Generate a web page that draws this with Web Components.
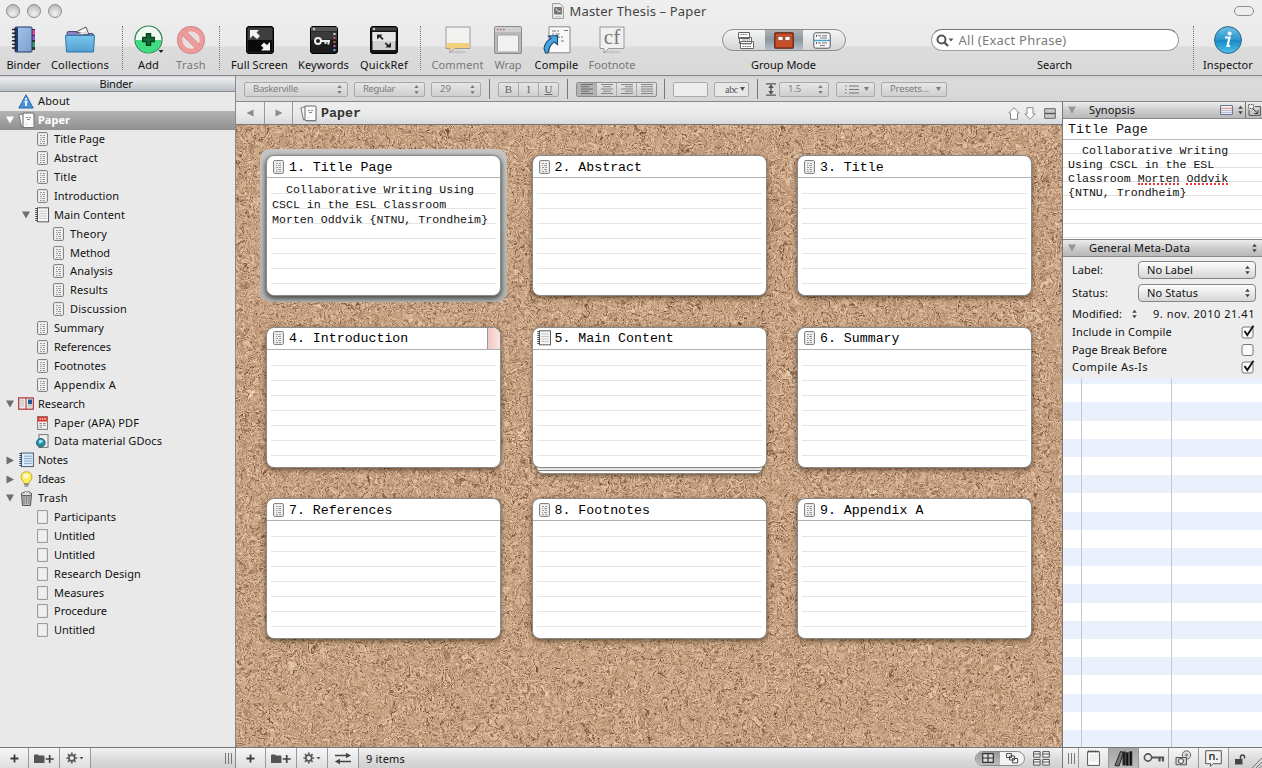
<!DOCTYPE html>
<html lang="en">
<head>
<meta charset="utf-8">
<title>Master Thesis – Paper</title>
<style>
html,body{margin:0;height:100%;overflow:hidden}
body{font:11px/14px "Noto Sans","Open Sans",sans-serif;color:#111;background:#ececec}
</style>
</head>
<body>
<app-window></app-window>
<script>
const doc = (w=11,h=14) => `<svg width="${w}" height="${h}" viewBox="0 0 11 14"><rect x=".6" y=".6" width="9.800" height="12.800" rx="1" fill="#f2f2f2" stroke="#777"/><g stroke="#999" stroke-width="1"><path d="M3 3.500h2M6 3.500h2M3 5.500h1M5 5.500h3M3 7.500h2M6 7.500h2M3 9.500h1M5 9.500h3M3 11.500h2M6 11.500h2"/></g></svg>`;
const stack = `<svg width="17" height="17" viewBox="0 0 17 17"><path d="M.8 3 5 1.600l2.500 12L3.600 15z" fill="#f4f4f4" stroke="#777"/><rect x="5" y="1" width="11" height="14.600" rx="1" fill="#fafafa" stroke="#666"/><path d="M8 5.500h2M11 5.500h2M9 7.500h3" stroke="#888"/><path d="M8 12.500h1" stroke="#bbb"/><path d="M6 16.200h10.600V4" fill="none" stroke="#999" stroke-width=".7"/></svg>`;
const note = `<svg width="14" height="16" viewBox="0 0 14 16"><rect x="2.500" y=".8" width="11" height="14" fill="#f6f6f6" stroke="#5d5d5d"/><path d="M4 4h8M4 6.500h8M4 9h8M4 11.500h8" stroke="#bbb" stroke-width=".8"/><path d="M1.600 1v14" stroke="#444" stroke-width="2.600" stroke-dasharray="1 1"/></svg>`;
const gear = `<svg width="18" height="12" viewBox="0 0 18 12"><circle cx="5.800" cy="6" r="2.900" fill="none" stroke="#555" stroke-width="1.600"/><path d="M5.800.6v2M5.800 9.400v2M.4 6h2M9.200 6h2M2 2.200l1.400 1.400M8.200 8.400l1.400 1.400M9.600 2.200 8.200 3.600M3.400 8.400 2 9.800" stroke="#555" stroke-width="1.700"/><path d="M13.500 5h4l-2 2.500z" fill="#555"/></svg>`;
const ICONS = {
doc:doc(), stack, note, gear,
blank:`<svg width="11" height="14"><path d="M.6.6h9.800v12.800H.6z" fill="#efefef" stroke="#8a8a8a" stroke-width=".9"/></svg>`,
info:`<svg width="16" height="15" viewBox="0 0 16 15"><path d="M8 .8 15.200 14H.8z" fill="#4593d6" stroke="#2c6ba5" stroke-linejoin="round"/><path d="M5 9 8 3l3 6z" fill="#79bbed"/><path d="M8 4v1.700M8 7v5" stroke="#fff" stroke-width="1.700"/></svg>`,
research:`<svg width="16" height="13" viewBox="0 0 16 13"><rect x=".7" y=".9" width="14.600" height="11.300" fill="#f0ebeb" stroke="#a33" stroke-width="1.200"/><path d="M8 1v11" stroke="#a33"/><path d="M2 3.200h4M2 5h4M2 7h4M2 9h4M9.500 8.500h4.500M9.500 10h4.500" stroke="#bbb" stroke-width=".9"/><path d="M10 2.500h4v4.700h-4z" fill="#185a97"/></svg>`,
pdf:`<svg width="11" height="14" viewBox="0 0 11 14"><rect x=".6" y=".6" width="9.800" height="12.800" fill="#f2f2f2" stroke="#777"/><path d="M.6.6h9.800v5H.6z" fill="#d93a33"/><path d="M2.500 3h1.700M5 3h1.400M7.300 3h1.600" stroke="#ffd0cc" stroke-width="1.400"/><path d="M2.500 7.500h2.400M6 7.500h2.500M2.500 9.400h2.400M6 9.400h2.500M2.500 11.300h2.400" stroke="#888"/></svg>`,
web:`<svg width="13" height="14" viewBox="0 0 13 14"><rect x="3" y=".6" width="9" height="12.800" fill="#eee" stroke="#777"/><circle cx="4.800" cy="8.800" r="4.300" fill="#2f8faf" stroke="#1c5a76"/><path d="M3 6.500q2-1.500 3.400 0T4.800 9 3 8z" fill="#9be3ef"/><path d="M4 12.200q2-2 3.600-1" stroke="#1c8f5a" fill="none"/></svg>`,
notes:`<svg width="15" height="16" viewBox="0 0 15 16"><rect x="2.400" y="1" width="12" height="13.600" fill="#dcecfb" stroke="#46607a"/><path d="M5 4.200h8M5 6.600h8M5 9h8M5 11.400h8" stroke="#8aa8c8"/><path d="M1.600 1v14" stroke="#24405c" stroke-width="2.400" stroke-dasharray="1.100 .9"/></svg>`,
bulb:`<svg width="13" height="17" viewBox="0 0 13 17"><path d="M6.500.8a5.300 5.300 0 0 1 3 9.800L9 12.500H4L3.500 10.600A5.300 5.300 0 0 1 6.500.8z" fill="#ffed5c" stroke="#c9ab2a"/><circle cx="6.200" cy="5" r="2.600" fill="#fffbd0"/><path d="M4 13.200h5M4.500 15h4" stroke="#8d8d8d" stroke-width="1.600"/></svg>`,
can:`<svg width="13" height="16" viewBox="0 0 13 16"><path d="M1.500 4.500h10l-1 11h-8z" fill="#b9b9b9" stroke="#555"/><path d="M4 6v8M6.500 6v8M9 6v8" stroke="#7f7f7f"/><ellipse cx="6.500" cy="4" rx="5.500" ry="1.700" fill="#ddd" stroke="#555"/><path d="M4 3l1-2 2 1.500L9 .8 9.500 3.500" fill="#f5f5f5" stroke="#777" stroke-width=".8"/></svg>`,
down:`<svg width="10" height="8"><path d="M1 .5h8L5 7.500z" fill="#6e6e6e"/></svg>`,
downw:`<svg width="10" height="8"><path d="M1 .5h8L5 7.500z" fill="#fff"/></svg>`,
right:`<svg width="10" height="9"><path d="M1.500.5v8L9 4.500z" fill="#6e6e6e"/></svg>`,
ud:`<svg width="5" height="9" viewBox="0 0 5 9"><path d="M.3 3 2.500 0l2.200 3zM.3 6h4.400L2.500 9z" fill="currentColor"/></svg>`,
updown:`<svg width="7" height="10" viewBox="0 0 7 10"><path d="M1.200 3.800 3.500.8l2.300 3zM1.200 6.200h4.600L3.500 9.200z" fill="#444"/></svg>`,
binder:`<svg width="26" height="28" viewBox="0 0 26 28"><rect x="19" y="3" width="5" height="21" fill="#333"/><path d="M21 4h3v5h-3z" fill="#e0449a"/><path d="M21 10h3v4h-3z" fill="#8d59c9"/><path d="M21 16h3v5h-3z" fill="#37a06a"/><defs><linearGradient id="a" x2="1" y2="1"><stop stop-color="#a7c4ea"/><stop offset="1" stop-color="#7a9fd0"/></linearGradient></defs><rect x="4" y="1" width="17" height="25" rx="1" fill="url(#a)" stroke="#20365e"/><path d="M4 1.500h3v24H4z" fill="#1d3768"/><path d="M1 3.500h4M1 7.200h4M1 11h4M1 14.700h4M1 18.400h4M1 22h4" stroke="#222" stroke-width="1.400"/></svg>`,
collections:`<svg width="32" height="28" viewBox="0 0 32 28"><path d="M3 7q0-1.500 1.500-1.500h8l2 2H28q1.500 0 1.500 1.500v8H3z" fill="#8c7fc0" stroke="#4c4a86"/><path d="m12 6 10-5 3 8z" fill="#fafafa" stroke="#555"/><path d="m14 8 8-3 2 3z" fill="#ddd"/><defs><linearGradient id="b" x2="0" y2="1"><stop stop-color="#7cc6ec"/><stop offset="1" stop-color="#4f9fd2"/></linearGradient></defs><path d="M1.500 9.500h29L29.500 26H2.500z" fill="url(#b)" stroke="#2b77a6"/></svg>`,
add:`<svg width="30" height="30" viewBox="0 0 30 30"><circle cx="14.500" cy="14.500" r="13.500" fill="#eefaf1" stroke="#2f7f50" stroke-width="1.200"/><path d="M1.800 15h25.400a12.700 12.700 0 0 1-25.400 0z" fill="#3fdc84"/><path d="M8 14.500h13M14.500 8v13" stroke="#07431f" stroke-width="5.500"/><path d="M9.500 14.500h10M14.500 9.500v10" stroke="#1a6a3a" stroke-width="2.500"/><path d="M24.500 25h5L27 28z" fill="#222"/></svg>`,
trash:`<svg width="28" height="28" viewBox="0 0 28 28"><circle cx="14" cy="14" r="11" fill="none" stroke="#c08080" stroke-width="6"/><circle cx="14" cy="14" r="11" fill="#e9dede" stroke="#ee9b9b" stroke-width="4.600"/><path d="m6.500 6.500 15 15" stroke="#c98484" stroke-width="6"/><path d="m6 6 16 16" stroke="#ee9b9b" stroke-width="4.600"/></svg>`,
full:`<svg width="28" height="28" viewBox="0 0 28 28"><rect x=".5" y=".5" width="27" height="27" rx="2.500" fill="#222" stroke="#000"/><path d="M2 2h24v12H2z" fill="#3e3e3e"/><path d="M2 14h24v12H2z" fill="#0a0a0a"/><path d="M4 4h9L10.500 6.500l3.500 3.500-3 3L7 9.500l-3 3z" fill="#f2f2f2"/><path d="M24 24.500h-9l2.500-2.500-2.500-2.500 3-3 3 2.500 3-3z" fill="#f2f2f2"/></svg>`,
keywords:`<svg width="28" height="28" viewBox="0 0 28 28"><rect x=".5" y=".5" width="27" height="27" rx="2.500" fill="#1c1c1c" stroke="#000"/><path d="M1 1h26v4H1z" fill="#555"/><path d="M1 5.500h26v8H1z" fill="#3a3a3a"/><circle cx="4" cy="3" r="1.200" fill="#ccc"/><circle cx="8" cy="15" r="3" fill="none" stroke="#eee" stroke-width="2"/><path d="M11 15h9M18.500 15v3.500M15.500 15v3" stroke="#eee" stroke-width="2"/><path d="M23.500 7h2v2h-2z" fill="#ddd"/><path d="M23.500 11h2v2h-2z" fill="#c55"/><path d="M23.500 15h2v2h-2z" fill="#c66"/><path d="M23.500 19h2v2h-2z" fill="#a6c"/><path d="M23.500 23h2v2h-2z" fill="#7ad"/></svg>`,
quick:`<svg width="28" height="28" viewBox="0 0 28 28"><rect x=".5" y=".5" width="27" height="27" rx="2.500" fill="#161616" stroke="#000"/><path d="M1.500 1.500h25v3h-25z" fill="#444"/><circle cx="4" cy="3" r="1.200" fill="#ccc"/><path d="M2.500 6h23v18h-23z" fill="#d0d2d4"/><path d="M2.500 6h23v9h-23z" fill="#e6e7e7"/><path d="M7 8.500h5.500L11 10l2.600 2.700-1.200 1.200L9.600 11.200 7 13.500zM21 21.500h-5.500l1.500-1.500-2.300-2.400 1.200-1.200 2.500 2.300L21 16.500z" fill="#222"/></svg>`,
comment:`<svg width="26" height="28" viewBox="0 0 26 28"><ellipse cx="13" cy="26" rx="9" ry="1.500" fill="#c6c6c6"/><path d="M1 1h24v21.500H9.500L5 27v-4.500H1z" fill="#f2f2f0" stroke="#999"/><path d="M1.500 17h23v5H9.200L5.500 25.800V22h-4z" fill="#f0cf7d"/></svg>`,
wrap:`<svg width="28" height="28" viewBox="0 0 28 28"><rect x=".5" y=".5" width="27" height="27" rx="1.500" fill="#b9b9b9" stroke="#8a8a8a"/><path d="M1 1h26v5H1z" fill="#cfcfcf"/><path d="M3 3.500h1.800M6 3.500h1.800M9 3.500h1.800" stroke="#b77" stroke-width="1.600"/><path d="M3.500 9h21v17h-21z" fill="#f0f1f1" stroke="#a5a5a5"/></svg>`,
compile:`<svg width="28" height="28" viewBox="0 0 28 28"><path d="M6 .8h21v26H6z" fill="#f8f8f8" stroke="#8a8a8a"/><path d="M9 5h4M14 5h2M21 4.500h4M9 8h2M12.500 8h4M15 11h2M18 11h2M18 15h3" stroke="#777"/><path d="m5.500 10 9-.5v9l-3-2.500C7.500 18 6 21 5 27H2.500L1 22.500C2 17 5 14 8 12.600z" fill="#4aa5dc" stroke="#1b4a75" stroke-width="1.100"/></svg>`,
footnote:`<svg width="26" height="28" viewBox="0 0 26 28"><ellipse cx="13" cy="26" rx="9" ry="1.500" fill="#c6c6c6"/><path d="M1 1h24v21.500H9.500L5 27v-4.500H1z" fill="#f0f0f0" stroke="#999"/></svg>`,
inspect:`<svg width="30" height="30" viewBox="0 0 30 30"><defs><linearGradient id="c" x2="0" y2="1"><stop stop-color="#6fc0e4"/><stop offset=".5" stop-color="#2b97cf"/><stop offset=".52" stop-color="#188ac6"/><stop offset="1" stop-color="#4fc3ea"/></linearGradient></defs><circle cx="15" cy="15" r="13.400" fill="url(#c)" stroke="#2c6687"/><circle cx="16.600" cy="8.500" r="2" fill="#fff"/><path d="M12 12.500h4.500l-2 8.500h2.500" fill="none" stroke="#fff" stroke-width="2.200"/></svg>`,
gdocs:`<svg width="18" height="19" viewBox="0 0 18 19"><path d="M1.500 1.500h11v6h-11zM2.500 6.500h12v6h-12zM3.500 10.500h13v7h-13z" fill="#fff" stroke="#666"/><path d="M3.500 3.500h7M5 9h8M5.500 13h9M5.500 15.500h9" stroke="#777" stroke-dasharray="1.600 .7"/></svg>`,
gcork:`<svg width="20" height="17" viewBox="0 0 20 17"><rect x=".8" y=".8" width="18.400" height="15.400" rx="1" fill="#c8502c" stroke="#5b2011" stroke-width="1.200"/><path d="M4 4.500h5v4H4zM11 4.500h5v4h-5z" fill="#fff" stroke="#7d2f1b" stroke-width=".6"/></svg>`,
glist:`<svg width="18" height="17" viewBox="0 0 18 17"><rect x=".8" y=".8" width="16.400" height="15.400" rx="2" fill="#f8f8f8" stroke="#555"/><path d="M5 3.800h3M9 3.800h5M7 6h7M5 11h3M9 11h5M7 13.500h5" stroke="#777"/><path d="M1 8.500h16" stroke="#4aa1cb" stroke-width="1.600"/><path d="M3 3.800h1M3 11h1" stroke="#222" stroke-width="1.400"/></svg>`,
lens:`<svg width="18" height="13" viewBox="0 0 18 13"><circle cx="5.500" cy="5.500" r="4" fill="none" stroke="#555" stroke-width="2"/><path d="m8.500 8.500 3.500 3.500" stroke="#555" stroke-width="2.400"/><path d="M12.500 4.500h5l-2.500 3z" fill="#555"/></svg>`,
file:`<svg width="12" height="16" viewBox="0 0 12 16"><path d="M.6.6H8L11.400 4v11.400H.6z" fill="#eee" stroke="#999"/><rect x="2" y="4" width="8" height="7.500" rx="1" fill="#777"/><path d="M4 5.500c1 2.500 2 3 4.500 3" stroke="#eee" fill="none"/><path d="M3 13.500h6" stroke="#ccc"/></svg>`,
plus:`<svg width="9" height="9"><path d="M4.500 .5v8M.5 4.500h8" stroke="#3c3c3c" stroke-width="1.800"/></svg>`,
folder:`<svg width="20" height="11" viewBox="0 0 20 11"><path d="M0 2.500Q0 1.500 1 1.500h3l1 1h4.500q1 0 1 1V10H0z" fill="#555"/><path d="M15.700 2v8M11.700 6h8" stroke="#444" stroke-width="1.700"/></svg>`,
swap:`<svg width="18" height="13" viewBox="0 0 18 13"><path d="M1 3.500h11M17 9.500H6" stroke="#444" stroke-width="1.700"/><path d="m12 .8 5 2.700-5 2.700zM6 6.800.8 9.500 6 12.200z" fill="#444"/></svg>`,
grip:`<svg width="8" height="11"><path d="M1.500 0v11M4.500 0v11M7.500 0v11" stroke="#777"/></svg>`,
grid:`<svg width="12" height="10"><path d="M.7.7h10.600v8.600H.7zM6 .7v8.600M.7 5h10.600" fill="#ddd" stroke="#333" stroke-width="1.200"/></svg>`,
free:`<svg width="13" height="11"><path d="M.6.6h5v4h-5zM3.600 3h5v4h-5zM6.600 5.500h5v4.400h-5z" fill="#fff" stroke="#444"/></svg>`,
tiles:`<svg width="17" height="15"><path d="M.6.6h6.500v5.600H.6zM9.800.6h6.500v5.600H9.800zM.6 8.500h6.500v5.600H.6zM9.800 8.500h6.500v5.600H9.800zM.6 3h6.500M9.800 3h6.500M.6 11h6.500M9.800 11h6.500" fill="#f5f5f5" stroke="#555"/></svg>`,
pad:`<svg width="13" height="16"><path d="M.6 1.600h11.800v13.800H.6z" fill="#fff" stroke="#555"/><path d="M1 1.500h11" stroke="#444" stroke-width="2" stroke-dasharray="1.200 1"/><path d="M2.500 5h8M2.500 7h8M2.500 9h8M2.500 11h8" stroke="#ddd"/></svg>`,
books:`<svg width="20" height="17" viewBox="0 0 20 17"><path d="m1 15.500 5.500-14 3 1L5 16z" fill="#777" stroke="#222"/><path d="M8.500 1.500h3.200v14H8.500z" fill="#222"/><path d="M12 2.500h2.500v13H12zM15.500 1.500H18v14h-2.500z" fill="#111" stroke="#444" stroke-width=".6"/></svg>`,
key:`<svg width="22" height="12" viewBox="0 0 22 12"><circle cx="5" cy="5.500" r="3.600" fill="none" stroke="#555" stroke-width="1.600"/><path d="M8.500 5.500H20M20 4.500v5M16.500 5.500v4" stroke="#555" stroke-width="2.200"/></svg>`,
snap:`<svg width="17" height="16" viewBox="0 0 17 16"><circle cx="11.500" cy="5" r="4.200" fill="#ddd" stroke="#666"/><circle cx="11.500" cy="5" r="1.600" fill="#888"/><path d="M1 7.500h10.500v7.300H1z" fill="#ccc" stroke="#555"/><circle cx="6" cy="11" r="2.500" fill="#eee" stroke="#444"/></svg>`,
notebub:`<svg width="17" height="17" viewBox="0 0 17 17"><path d="M.7.7h15.600v13H8l-2.500 2.600v-2.600H.7z" fill="#f2f2f2" stroke="#555"/></svg>`,
lock:`<svg width="11" height="11" viewBox="0 0 11 11"><path d="M0 5h7.500v5.500H0z" fill="#444"/><path d="M5.500 5V3a2 2 0 0 1 4 0v1.500" fill="none" stroke="#444" stroke-width="1.500"/></svg>`,
resize:`<svg width="11" height="11"><path d="M1 11 11 1M5 11l6-6M8.500 11 11 8.500" stroke="#777"/></svg>`,
back:`<svg width="8" height="8"><path d="M7.500 .5v7L.5 4z" fill="#8b8b8b"/></svg>`,
fwd:`<svg width="8" height="8"><path d="M.5 .5v7L7.500 4z" fill="#8b8b8b"/></svg>`,
up:`<svg width="12" height="13"><path d="M6 .8 11.200 6H9.500v6.300h-7V6H.8z" fill="#fff" stroke="#888"/></svg>`,
dn:`<svg width="12" height="13"><path d="M6 12.200 11.200 7H9V.7H3V7H.8z" fill="#fff" stroke="#888"/></svg>`,
split:`<svg width="12" height="11"><path d="M.7.7h10.600v9.600H.7z" fill="#c9c9c9" stroke="#666"/><path d="M.7 5.500h10.600" stroke="#555" stroke-width="1.400"/></svg>`,
spacing:`<svg width="10" height="13"><path d="M0 .8h10M0 12.200h10M5 2v9" stroke="#555" stroke-width="1.300"/><path d="M5 1.500 7.800 5H2.200zM5 11.500 7.800 8H2.200z" fill="#555"/></svg>`,
list:`<svg width="14" height="9"><path d="M0 1h1.500M0 4.500h1.500M0 8h1.500M4 1h10M4 4.500h10M4 8h10" stroke="#777" stroke-width="1.200"/></svg>`,
tri:`<svg width="5" height="4"><path d="M0 0h5L2.500 4z" fill="currentColor"/></svg>`,
al:`<svg width="12" height="10"><path d="M0 .5h12M0 2.700h8M0 5h12M0 7.200h8M0 9.500h12" stroke="#6f6f6f"/></svg>`,
ac:`<svg width="12" height="10"><path d="M0 .5h12M2 2.700h8M0 5h12M2 7.200h8M0 9.500h12" stroke="#848484"/></svg>`,
ar:`<svg width="12" height="10"><path d="M0 .5h12M4 2.700h8M0 5h12M4 7.200h8M0 9.500h12" stroke="#848484"/></svg>`,
aj:`<svg width="12" height="10"><path d="M0 .5h12M0 2.700h12M0 5h12M0 7.200h12M0 9.500h12" stroke="#848484"/></svg>`,
card:`<svg width="13" height="10"><path d="M.6.6h11.800v8.800H.6z" fill="#fff" stroke="#5e6a86"/><path d="M1 3.300h11" stroke="#d77"/><path d="M1 5.300h11M1 7.300h11" stroke="#aac"/></svg>`,
img:`<svg width="13" height="12"><path d="M.6.6h5v4h-5z" fill="#eee" stroke="#555" stroke-dasharray="1.500 .8"/><path d="M7 2.600h5.400v8.800H1V6" fill="none" stroke="#555"/><path d="m5 5 4.500 4M10 6v3.500H6.500" stroke="#333" fill="none"/></svg>`,
check:`<svg width="14" height="14" viewBox="0 0 14 14"><rect x="1" y="2" width="11" height="11" rx="2" fill="#fbfbfb" stroke="#777"/><path d="m3.500 6 2.800 4L12.500 .8" fill="none" stroke="#111" stroke-width="1.900"/></svg>`,
uncheck:`<svg width="14" height="14" viewBox="0 0 14 14"><rect x="1" y="1.500" width="11" height="11" rx="2" fill="#fbfbfb" stroke="#777"/></svg>`
};

const define = (tag, css, html) => customElements.define(tag, class extends HTMLElement{
  constructor(){
    super();
    this.attachShadow({mode:'open'});
  }
  connectedCallback(){
    if(this.shadowRoot.childNodes.length) return;
    const t = document.createElement('template');
    t.innerHTML = `<style>*{box-sizing:border-box}${css}</style>${typeof html==='function' ? html(this) : html}`;
    this.shadowRoot.append(t.content.cloneNode(true));
  }
});

/* Text whose tracking is adjusted so that it fills the width "w". */
const fitted = [];
customElements.define('fit-text', class extends HTMLElement{
  constructor(){
    super();
    this.attachShadow({mode:'open'}).innerHTML = '<style>:host{display:inline-block;white-space:pre}</style><span><slot></slot></span>';
  }
  connectedCallback(){ fitted.push(this); }
  fit(){
    const w = +this.getAttribute('w');
    if(!w) return;
    const n = this.textContent.length;
    const now = this.shadowRoot.querySelector('span').getBoundingClientRect().width;
    if(now) this.style.letterSpacing = ((w - now) / n).toFixed(3) + 'px';
  }
});

define('ui-icon', ':host{display:inline-flex;flex:none}svg{display:block}', h => ICONS[h.getAttribute('name')] || '');

define('title-bar', `
:host{display:flex;height:22px;align-items:center}
.l{display:flex;gap:7px;padding-left:6px}
.l i{width:14px;height:14px;border-radius:50%;border:1px solid #8e8e8e;background:radial-gradient(circle at 50% 75%,#f2f2f2,#cfcfcf 55%,#a9a9a9)}
.t{flex:1;display:flex;justify-content:center;align-items:center;gap:6px;font-size:13px;line-height:18px;color:#444;padding-right:38px}
.p{width:20px;height:10px;border:1px solid #8e8e8e;border-radius:5px;background:#eee;margin-right:8px}
`, `<div class="l"><i></i><i></i><i></i></div><div class="t"><ui-icon name="file"></ui-icon><fit-text w="137">Master Thesis – Paper</fit-text></div><div class="p"></div>`);

define('tool-item', `
:host{display:flex;flex-direction:column;align-items:center;flex:none;height:54px}
.i{height:36px;display:flex;align-items:center;justify-content:center}
.t{line-height:13px}
:host([dim]) .t{color:#777}
`, h => `<div class="i"><slot><ui-icon name="${h.getAttribute('icon')}"></ui-icon></slot></div><div class="t"><fit-text w="${h.getAttribute('tw')}">${h.getAttribute('label')}</fit-text></div>`);
define('tool-sep', ':host{display:flex;justify-content:center;flex:none;height:44px;margin-top:4px}i{width:0;border-left:1px dotted #777}', '<i></i>');

define('tool-bar', `
:host{display:flex;height:54px;align-items:flex-start}
.sp{flex:none}
.seg{display:flex;width:124px;height:22px;border:1px solid #8f8f8f;border-radius:11px;overflow:hidden;background:linear-gradient(#f5f5f5,#d2d4d6)}
.seg div{flex:1;display:flex;align-items:center;justify-content:center}
.seg .on{flex:0 0 38px;background:linear-gradient(#b0b4b8,#8d969c 50%,#b7c3ca)}
.search{display:flex;align-items:center;gap:5px;width:248px;height:22px;border:1px solid #a2a2a2;border-top-color:#777;border-radius:11px;background:#fff;padding:0 0 0 4px;color:#7b7b7b;font-size:13px}
.cf{display:grid;place-items:center}.cf>*{grid-area:1/1}.cf span{font:21px/20px "Liberation Serif",serif;color:#777;margin-top:-6px}
`, `
<tool-item icon="binder" label="Binder" tw="34" style="width:47px"></tool-item>
<tool-item icon="collections" label="Collections" tw="58" style="width:66px"></tool-item>
<tool-sep style="width:18px"></tool-sep>
<tool-item icon="add" label="Add" tw="21" style="width:35px"></tool-item>
<tool-item icon="trash" label="Trash" tw="30" dim style="width:50px"></tool-item>
<tool-sep style="width:7px"></tool-sep>
<tool-item icon="full" label="Full Screen" tw="57" style="width:73px"></tool-item>
<tool-item icon="keywords" label="Keywords" tw="51" style="width:55px"></tool-item>
<tool-item icon="quick" label="QuickRef" tw="48" style="width:66px"></tool-item>
<tool-sep style="width:7px"></tool-sep>
<tool-item icon="comment" label="Comment" tw="52" dim style="width:67px"></tool-item>
<tool-item icon="wrap" label="Wrap" tw="27" dim style="width:34px"></tool-item>
<tool-item icon="compile" label="Compile" tw="44" style="width:63px"></tool-item>
<tool-item label="Footnote" tw="47" dim style="width:48px"><div class="cf"><ui-icon name="footnote"></ui-icon><span>cf</span></div></tool-item>
<div class="sp" style="width:77px"></div>
<tool-item label="Group Mode" tw="65" style="width:141px"><div class="seg"><div style="padding-left:4px"><ui-icon name="gdocs"></ui-icon></div><div class="on"><ui-icon name="gcork"></ui-icon></div><div style="padding-right:4px"><ui-icon name="glist"></ui-icon></div></div></tool-item>
<div class="sp" style="width:67px"></div>
<tool-item label="Search" tw="35" style="width:267px"><div class="search"><ui-icon name="lens"></ui-icon><fit-text w="108">All (Exact Phrase)</fit-text></div></tool-item>
<tool-sep style="width:10px"></tool-sep>
<tool-item icon="inspect" label="Inspector" tw="50" style="width:60px"></tool-item>`);

define('tree-row', `
:host{display:flex;align-items:center;height:18.900px;flex:none}
.a{width:18px;padding-left:5px;flex:none;display:flex}
.i{width:16px;flex:none;display:flex;justify-content:center;align-items:center}
.t{padding-left:4px;line-height:16px}
:host([sel]){background:linear-gradient(#b4b4b4,#8f8f8f);color:#fff;font-weight:bold}
`, h => {
  const g = k => h.getAttribute(k);
  h.style.paddingLeft = (+g('lv')*16)+'px';
  return `<div class="a">${g('arrow')?`<ui-icon name="${g('arrow')}"></ui-icon>`:''}</div><div class="i"><ui-icon name="${g('icon')}"></ui-icon></div><div class="t"><fit-text w="${g('tw')}">${g('label')}</fit-text></div>`;
});

const ROWS = [
[0,'','info','About',32],[0,'downw','stack','Paper',32],
[1,'','doc','Title Page',51],[1,'','doc','Abstract',44],[1,'','doc','Title',23],[1,'','doc','Introduction',65],
[1,'down','note','Main Content',71],[2,'','doc','Theory',37],[2,'','doc','Method',40],[2,'','doc','Analysis',43],[2,'','doc','Results',38],[2,'','doc','Discussion',57],
[1,'','doc','Summary',50],[1,'','doc','References',57],[1,'','doc','Footnotes',52],[1,'','doc','Appendix A',62],
[0,'down','research','Research',47],[1,'','pdf','Paper (APA) PDF',85],[1,'','web','Data material GDocs',108],
[0,'right','notes','Notes',30],[0,'right','bulb','Ideas',27],[0,'down','can','Trash',30],
[1,'','blank','Participants',62],[1,'','blank','Untitled',41],[1,'','blank','Untitled',41],[1,'','blank','Research Design',87],[1,'','blank','Measures',50],[1,'','blank','Procedure',53],[1,'','blank','Untitled',41]];

define('binder-panel', `
:host{display:flex;flex-direction:column;width:236px;border-right:1px solid #8a8a8a;background:#e9e9e9;flex:none;min-height:0}
.h{height:16px;line-height:15px;text-align:center;background:linear-gradient(#cfd2d6,#eceef0 15%,#b9bfc6);border-bottom:1px solid #8d8d8d;flex:none;padding-right:3px}
.r{flex:1;min-height:0;display:flex;flex-direction:column}
`, `<div class="h"><fit-text w="33">Binder</fit-text></div><div class="r">${ROWS.map((r,i)=>`<tree-row lv="${r[0]}" arrow="${r[1]}" icon="${r[2]}" label="${r[3]}" tw="${r[4]}"${i===1?' sel':''}></tree-row>`).join('')}</div><foot-bar kind="binder"></foot-bar>`);

define('format-bar', `
:host{display:flex;align-items:center;height:26px;flex:none;background:linear-gradient(#d2d2d2,#dcdcdc 20%,#d6d6d6);border-bottom:1px solid #888;padding:1px 0 0 8px;font-size:9.500px;color:#7c7c7c}
.b{display:flex;align-items:center;justify-content:space-between;height:15px;border:1px solid #a9a9a9;border-radius:2px;background:linear-gradient(#e6e6e6,#cfcfcf);padding:0 5px 0 8px;flex:none;line-height:12px}
.s{width:1px;height:20px;background:#777;flex:none}
.g{padding:0}.g>*{flex:1;display:flex;align-items:center;justify-content:center;height:100%;font:11px/12px "Liberation Serif",serif;color:#666}
.g>*+*{border-left:1px solid #aaa}
.g .on{background:#b2b2b2}
`, `
<div class="b" style="width:104px"><fit-text w="45">Baskerville</fit-text><ui-icon name="ud"></ui-icon></div>
<div class="b" style="width:71px;margin-left:6px"><fit-text w="32">Regular</fit-text><ui-icon name="ud"></ui-icon></div>
<div class="b" style="width:50px;margin-left:6px"><fit-text w="11">29</fit-text><ui-icon name="ud"></ui-icon></div>
<div class="s" style="margin:0 8px"></div>
<div class="b g" style="width:61px"><b>B</b><i>I</i><u>U</u></div>
<div class="s" style="margin:0 8px"></div>
<div class="b g" style="width:81px;border-color:#8e8e8e"><span class="on"><ui-icon name="al"></ui-icon></span><span><ui-icon name="ac"></ui-icon></span><span><ui-icon name="ar"></ui-icon></span><span><ui-icon name="aj"></ui-icon></span></div>
<div class="s" style="margin:0 8px 0 7px"></div>
<div class="b" style="width:35px;background:#ececec"></div>
<div class="b" style="width:35px;margin-left:6px;background:#e8e8e8;padding:0 3px 0 10px;color:#555"><fit-text w="13" style="font:10px 'Liberation Serif',serif">abc</fit-text><ui-icon name="tri"></ui-icon></div>
<div class="s" style="margin:0 8px"></div>
<ui-icon name="spacing"></ui-icon>
<div class="b" style="width:50px;margin-left:3px"><fit-text w="13">1.5</fit-text><ui-icon name="ud"></ui-icon></div>
<div class="b" style="width:39px;margin-left:7px"><ui-icon name="list"></ui-icon><ui-icon name="tri"></ui-icon></div>
<div class="b" style="width:66px;margin-left:6px"><fit-text w="39">Presets...</fit-text><ui-icon name="tri"></ui-icon></div>`);

define('path-bar', `
:host{display:flex;height:23px;align-items:stretch;background:linear-gradient(#eee,#e9e9e9 60%,#d6d9dc);border-bottom:1px solid #777;flex:none;padding-right:6px}
.n{width:29px;border-right:1px solid #999;display:flex;align-items:center;justify-content:center}
.p{flex:1;display:flex;align-items:center;gap:4px;padding:1px 0 0 7px;font:bold 13.300px/16px "Liberation Mono",monospace;color:#333}
.r{display:flex;align-items:center;gap:4px}
`, `<div class="n"><ui-icon name="back"></ui-icon></div><div class="n" style="width:28px"><ui-icon name="fwd"></ui-icon></div><div class="p"><ui-icon name="stack"></ui-icon><span>Paper</span></div><div class="r"><ui-icon name="up"></ui-icon><ui-icon name="dn"></ui-icon><ui-icon name="split" style="margin-left:4px"></ui-icon></div>`);

define('index-card', `
:host{display:block;position:relative;height:141px;border-radius:8px;font-family:"Liberation Mono",monospace}
.c{position:relative;height:141px;border:1px solid #8a8a88;border-radius:8px;background:#fff;overflow:hidden;box-shadow:0 2px 5px rgba(40,20,0,.6)}
:host([sel]) .halo{position:absolute;inset:-6px -6px -6px -6px;border-radius:10px;background:linear-gradient(#c3c4c3,#b2b3b3)}
:host([sel]) .c{box-shadow:0 2px 4px 1px rgba(0,0,0,.55)}
.h{display:flex;align-items:center;height:22px;border-bottom:1px solid #b0b0b0;padding-left:5px;font-size:13.250px;line-height:16px;color:#000}
.h .i{width:13px;display:flex;justify-content:center;margin-right:4px}
.h .t{padding-top:2px;white-space:pre;flex:1}
.tab{width:13px;height:21px;border-left:1px solid #999;background:linear-gradient(90deg,#f1c6bf,#fae6e2)}
.b{margin:0 4px;height:112px;padding:4px 0 0 1px;font-size:11.620px;line-height:15px;white-space:pre;color:#111;background:repeating-linear-gradient(#fff0 0 14px,#e4e4e4 14px 15px) 0 1px}
.x{display:none}
:host([stack]) .x{display:block;position:absolute;left:4px;right:4px;top:130px;height:17px;border:1px solid #8a8a88;border-radius:0 0 7px 7px;background:linear-gradient(#fff 12px,#8a8a88 12px 13px,#fff 13px);box-shadow:0 2px 4px rgba(40,20,0,.5)}
:host([stack]) .c{box-shadow:0 0 4px rgba(40,20,0,.35)}
`, h => `<div class="halo"></div><div class="x"></div><div class="c"><div class="h"><div class="i"><ui-icon name="${h.hasAttribute('stack')?'note':'doc'}"></ui-icon></div><div class="t">${h.getAttribute('label')}</div>${h.hasAttribute('tab')?'<div class="tab"></div>':''}</div><div class="b"><slot></slot></div></div>`);

define('cork-board', `
:host{display:grid;flex:1;min-height:0;overflow:hidden;background:#c39d78}
svg,.g{grid-area:1/1;min-height:0}
svg{width:1000px;height:800px;margin:-60px}
.g{position:relative;display:grid;grid-template-columns:repeat(3,235px);column-gap:30.500px;grid-auto-rows:141px;row-gap:30.500px;padding:30px 0 0 30px;align-content:start}
`, `<svg><filter id="cork" x="0" y="0" width="100%" height="100%" color-interpolation-filters="sRGB">
<feTurbulence type="fractalNoise" baseFrequency=".3" numOctaves="3" seed="8" result="n"/>
<feTurbulence type="fractalNoise" baseFrequency=".07" numOctaves="3" seed="3" result="d"/>
<feDisplacementMap in="n" in2="d" scale="40" xChannelSelector="R" yChannelSelector="G"/>
<feColorMatrix values=".7 .4 0 0 -.05  .7 .4 0 0 -.05  .7 .4 0 0 -.05  0 0 0 0 1"/>
<feComponentTransfer><feFuncR type="table" tableValues=".3 .35 .42 .54 .69 .78 .84 .89 .93 .96 1"/><feFuncG type="table" tableValues=".18 .22 .29 .4 .54 .635 .71 .775 .82 .88 .9"/><feFuncB type="table" tableValues=".1 .14 .2 .3 .42 .51 .59 .66 .72 .78 .85"/></feComponentTransfer></filter><rect width="100%" height="100%" filter="url(#cork)"/></svg>
<div class="g"><index-card sel label="1. Title Page">  Collaborative Writing Using
CSCL in the ESL Classroom
Morten Oddvik {NTNU, Trondheim}</index-card><index-card label="2. Abstract"></index-card><index-card label="3. Title"></index-card><index-card tab label="4. Introduction"></index-card><index-card stack label="5. Main Content"></index-card><index-card label="6. Summary"></index-card><index-card label="7. References"></index-card><index-card label="8. Footnotes"></index-card><index-card label="9. Appendix A"></index-card></div>`);

define('foot-bar', `
:host{display:flex;height:21px;flex:none;border-top:1px solid #777;background:linear-gradient(#f2f2f2,#dadada 60%,#cfcfcf)}
div{display:flex;align-items:center;justify-content:center;border-right:1px solid #999;flex:none;background:linear-gradient(#f6f6f6,#dedede)}
.f{flex:1;background:none;border:0;justify-content:flex-start}
.n{background:none;border:0}
.on{background:linear-gradient(#a5a5a5,#bdbdbd)}
.pill{width:50px;height:15px;border:1px solid #8a8a8a;border-radius:8px;overflow:hidden;align-self:center;margin-right:8px;background:#f2f2f2}
.pill div{flex:1;height:100%;border:0;background:none}
.pill .on{background:linear-gradient(#999,#bbb)}
.q{display:grid;place-items:center}.q>*{grid-area:1/1}.q span{font-weight:500;line-height:10px;margin-top:-4px}
`, h => {
  const b = (w,n,c='') => `<div class="${c}" style="width:${w}px"><ui-icon name="${n}"></ui-icon></div>`;
  const kind = h.getAttribute('kind');
  if(kind==='binder') return b(29,'plus')+b(31,'folder')+b(31,'gear')+'<div class="f"></div>'+b(15,'grip','n');
  if(kind==='editor') return b(30,'plus')+b(31,'folder')+b(31,'gear')+b(31,'swap')+'<div class="f" style="padding:1px 0 0 7px"><fit-text w="39">9 items</fit-text></div><div class="pill"><div class="on"><ui-icon name="grid"></ui-icon></div><div><ui-icon name="free"></ui-icon></div></div>'+b(29,'tiles','n').replace('style="','style="justify-content:flex-start;');
  return b(16,'grip')+b(30,'pad')+b(30,'books','on')+b(30,'key')+b(30,'snap')+'<div class="q" style="width:30px"><ui-icon name="notebub"></ui-icon><span>n.</span></div><div class="n" style="width:22px;padding-top:2px"><ui-icon name="lock"></ui-icon></div><div class="n" style="width:11px;align-items:flex-end"><ui-icon name="resize"></ui-icon></div>';
});

define('inspector-panel', `
:host{display:flex;flex-direction:column;width:200px;border-left:1px solid #777;flex:none;min-height:0;overflow:hidden;background:#ededed}
.h{display:flex;align-items:center;height:17px;background:linear-gradient(#ededed,#cdcdcd 50%,#b8b8b8);border-bottom:1px solid #888;flex:none;padding-left:4px;line-height:14px}
.h .t{flex:1;padding-left:12px}
.syn{background:#fff;height:120px;flex:none;font-family:"Liberation Mono",monospace;color:#111}
.st{height:21px;padding:3px 0 0 5px;font-size:13.300px;line-height:16px;border-bottom:1px solid #bbb}
.sb{height:99px;padding:4px 0 0 5px;font-size:11.620px;line-height:14px;white-space:pre;background:repeating-linear-gradient(#fff 0 13px,#e3e3e3 13px 14px)}
.ln{display:flex;height:14px}
.sp{display:block;height:13px;line-height:14px;border-bottom:2px dotted #e33;margin-right:7px}
.m{height:121px;flex:none;padding:1px 7px 0 9px}
.r{display:flex;align-items:center;justify-content:space-between}
.pop{display:flex;align-items:center;justify-content:space-between;width:118px;height:18px;border:1px solid #858585;border-radius:4px;background:linear-gradient(#fdfdfd,#d6d6d6);padding:0 4px 0 8px;margin-right:-1px}
.tb{flex:1;background:linear-gradient(#c6c6cc,#c6c6cc) 18px 0/1px 100% no-repeat,linear-gradient(#c6c6cc,#c6c6cc) 108px 0/1px 100% no-repeat,repeating-linear-gradient(#eaf1fc 0 18.200px,#fff 18.200px 36.400px) 0 -12px}
`, `
<div class="h"><ui-icon name="down" style="opacity:.6"></ui-icon><div class="t"><fit-text w="46">Synopsis</fit-text></div><ui-icon name="card"></ui-icon><ui-icon name="updown" style="margin:0 1px 0 4px"></ui-icon><ui-icon name="img" style="border-left:1px solid #777;padding:2px 1px 2px 2px"></ui-icon></div>
<div class="syn"><div class="st">Title Page</div><div class="sb"><div class="ln">  Collaborative Writing</div><div class="ln">Using CSCL in the ESL</div><div class="ln"><span>Classroom </span><span class="sp">Morten</span><span class="sp">Oddvik</span></div><div class="ln">{NTNU, Trondheim}</div></div></div>
<div class="h" style="border-top:1px solid #888;height:18px"><ui-icon name="down" style="opacity:.6"></ui-icon><div class="t"><fit-text w="101">General Meta-Data</fit-text></div><ui-icon name="updown" style="margin-right:4px"></ui-icon></div>
<div class="m">
<div class="r" style="height:23px"><fit-text w="31">Label:</fit-text><div class="pop"><fit-text w="46">No Label</fit-text><ui-icon name="updown"></ui-icon></div></div>
<div class="r" style="height:23px"><fit-text w="36">Status:</fit-text><div class="pop"><fit-text w="51">No Status</fit-text><ui-icon name="updown"></ui-icon></div></div>
<div class="r" style="height:19px"><fit-text w="50">Modified:</fit-text><ui-icon name="updown" style="margin:0 7px 0 0"></ui-icon><fit-text w="102">9. nov. 2010 21.41</fit-text></div>
<div class="r" style="height:18px"><fit-text w="100">Include in Compile</fit-text><ui-icon name="check"></ui-icon></div>
<div class="r" style="height:17px"><fit-text w="95">Page Break Before</fit-text><ui-icon name="uncheck"></ui-icon></div>
<div class="r" style="height:17px"><fit-text w="76">Compile As-Is</fit-text><ui-icon name="check"></ui-icon></div>
</div>
<div class="tb"></div>
<foot-bar kind="inspector"></foot-bar>`);

define('app-window', `
:host{display:flex;flex-direction:column;height:768px;width:1262px}
header{height:76px;box-sizing:border-box;flex:none;background:linear-gradient(#efefef 0,#e9e9e9 46px,#dcdcdc 47px,#d8d8d8);border-bottom:1px solid #888}
main{flex:1;display:flex;min-height:0}
.w{flex:1;display:flex;flex-direction:column;min-width:0}
.v{flex:1;display:flex;min-height:0}
.e{flex:1;display:flex;flex-direction:column;min-width:0}
`, `<header><title-bar></title-bar><tool-bar></tool-bar></header><main><binder-panel></binder-panel><div class="w"><format-bar></format-bar><div class="v"><div class="e"><path-bar></path-bar><cork-board></cork-board><foot-bar kind="editor"></foot-bar></div><inspector-panel></inspector-panel></div></div></main>`);

fitted.forEach(t => t.fit());
</script>
</body>
</html>
